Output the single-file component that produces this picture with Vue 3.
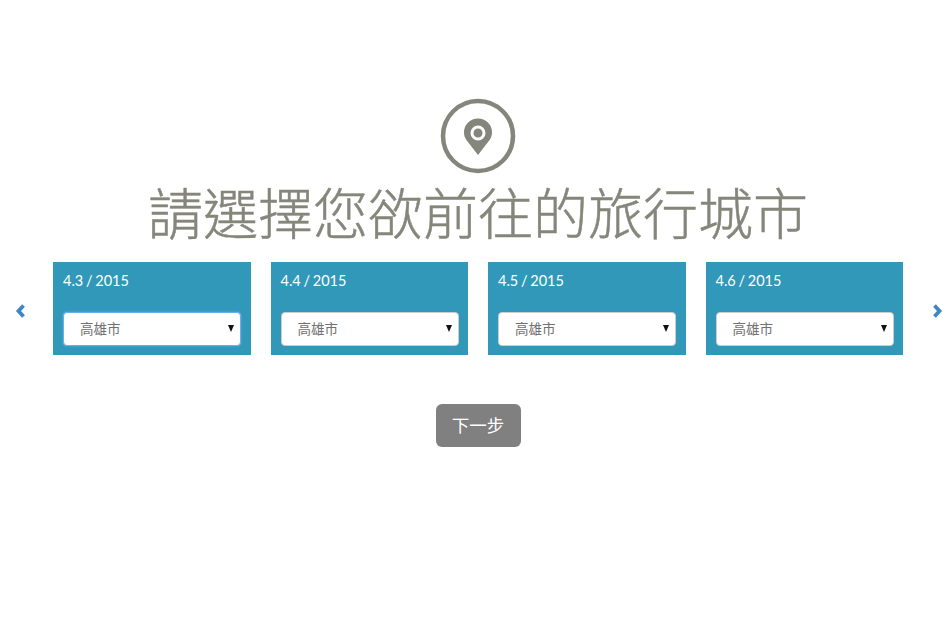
<script setup>
const days = ["4.3 / 2015", "4.4 / 2015", "4.5 / 2015", "4.6 / 2015"];
</script>

<template>
  <div class="page">
    <svg class="pin" width="76" height="76" viewBox="0 0 76 76">
      <circle cx="38" cy="38" r="35" fill="none" stroke="#85867b" stroke-width="4.5" />
      <path
        fill="#85867b"
        fill-rule="evenodd"
        d="M38 20.500a14 14 0 0 1 14 14c0 3-1 5.500-2.600 7.800L38 57 26.600 42.300C25 40 24 37.500 24 34.500a14 14 0 0 1 14-14zm0 7a7.500 7.500 0 1 0 0 15 7.500 7.500 0 0 0 0-15zm0 3a4.500 4.500 0 1 1 0 9 4.500 4.500 0 0 1 0-9z"
      />
    </svg>
    <h1 class="title">請選擇您欲前往的旅行城市</h1>

    <div class="carousel">
      <button class="arrow">
        <svg width="12" height="16" viewBox="0 0 12 16"><path d="M8.500 2.500 3.500 8 8.500 13.500" /></svg>
      </button>
      <div class="cards">
        <div v-for="(day, i) in days" :key="day" class="card">
          <div class="date">{{ day }}</div>
          <div class="select" :class="{ focus: i === 0 }">
            <span>高雄市</span>
            <i class="caret"></i>
          </div>
        </div>
      </div>
      <button class="arrow">
        <svg width="12" height="16" viewBox="0 0 12 16"><path d="M3.500 2.500 8.500 8 3.500 13.500" /></svg>
      </button>
    </div>

    <button class="next">下一步</button>
  </div>
</template>

<style scoped>
.page {
  display: flex;
  flex-direction: column;
  align-items: center;
  height: 631px;
  padding-top: 98px;
  box-sizing: border-box;
  background: #fff;
  font-family: Lato, "Noto Sans CJK TC", sans-serif;
}
.pin {
  display: block;
  margin-left: 6px;
}
.title {
  margin: -4px 0 12px 6px;
  font-family: "Noto Sans CJK TC", sans-serif;
  font-size: 55px;
  line-height: 80px;
  font-weight: 300;
  -webkit-text-stroke: 0.5px #85867b;
  color: #85867b;
  white-space: nowrap;
}
.carousel {
  width: 100%;
  display: flex;
  align-items: center;
  padding-left: 15px;
  box-sizing: border-box;
}
.arrow {
  width: 12px;
  height: 16px;
  border: 0;
  padding: 0;
  background: none;
  margin-top: 4px;
}
.arrow svg {
  display: block;
}
.arrow path {
  fill: none;
  stroke: #3f85c9;
  stroke-width: 3.8;
}
.cards {
  display: grid;
  grid-template-columns: repeat(4, 197.5px);
  gap: 20px;
  margin: 0 28px 0 26px;
}
.card {
  height: 93px;
  padding: 9px 9.5px 0 10px;
  box-sizing: border-box;
  background: #3298b9;
  color: #fff;
}
.date {
  font-size: 14.5px;
  line-height: 20px;
  word-spacing: -1px;
}
.select {
  display: flex;
  align-items: center;
  justify-content: space-between;
  height: 34px;
  margin-top: 21px;
  padding: 0 6px 2px 16px;
  box-sizing: border-box;
  background: #fff;
  border: 1px solid #ccc;
  border-radius: 4px;
  color: #707070;
  font-size: 13.5px;
}
.select.focus {
  border-color: #66afe9;
  box-shadow: 0 0 2px #66afe9;
}
.caret {
  width: 0;
  height: 0;
  border-left: 3.5px solid transparent;
  border-right: 3.5px solid transparent;
  border-top: 7px solid #111;
}
.next {
  width: 85px;
  height: 43px;
  margin: 49px 0 0 6px;
  padding: 0 0 2px;
  border: 0;
  border-radius: 6px;
  background: #808080;
  color: #fff;
  font-family: inherit;
  font-size: 17.5px;
}
</style>
